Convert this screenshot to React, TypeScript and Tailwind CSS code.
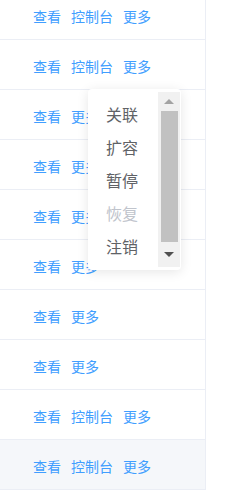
import React from 'react';

const rows = [
  { console: true },
  { console: true },
  { console: false },
  { console: false },
  { console: false },
  { console: false },
  { console: false },
  { console: false },
  { console: true },
  { console: true, hover: true },
];

const menu = [
  { label: '关联' },
  { label: '扩容' },
  { label: '暂停' },
  { label: '恢复', disabled: true },
  { label: '注销' },
];

export default function App() {
  return (
    <div
      className="relative h-[496px] w-[233px] overflow-hidden bg-white"
      style={{ fontFamily: '"Noto Sans CJK SC", "Noto Sans", sans-serif' }}
    >
      <div className="-mt-[10px] w-[206px] border-r border-[#ebeef5]">
        {rows.map((row, i) => (
          <div
            key={i}
            className={`flex h-[50px] items-center gap-[10px] border-b border-[#ebeef5] pl-[33px] pt-[4px] text-[14px] text-[#409eff] ${
              row.hover ? 'bg-[#f5f7fa]' : ''
            }`}
          >
            <span>查看</span>
            {row.console && <span>控制台</span>}
            <span>更多</span>
          </div>
        ))}
      </div>

      {/* dropdown menu */}
      <div className="absolute left-[88px] top-[89px] flex h-[181px] w-[93px] rounded-[4px] bg-white shadow-[0_2px_12px_0_rgba(0,0,0,0.1)]">
        <ul className="flex-1 pt-[8px]">
          {menu.map((m) => (
            <li
              key={m.label}
              className={`flex h-[33px] items-center pl-[18px] text-[16px] ${
                m.disabled ? 'text-[#c0c4cc]' : 'text-[#606266]'
              }`}
            >
              {m.label}
            </li>
          ))}
        </ul>
        <div className="my-[3px] mr-[1px] flex w-[22px] flex-col items-center bg-[#f1f1f1]">
          <div className="flex h-[19px] items-center justify-center">
            <div className="h-0 w-0 border-x-[5px] border-b-[5px] border-x-transparent border-b-[#a3a3a3]" />
          </div>
          <div className="h-[131px] w-[17px] bg-[#c1c1c1]" />
          <div className="flex h-[24px] items-center justify-center">
            <div className="h-0 w-0 border-x-[5px] border-t-[5px] border-x-transparent border-t-[#505050]" />
          </div>
        </div>
      </div>
    </div>
  );
}
